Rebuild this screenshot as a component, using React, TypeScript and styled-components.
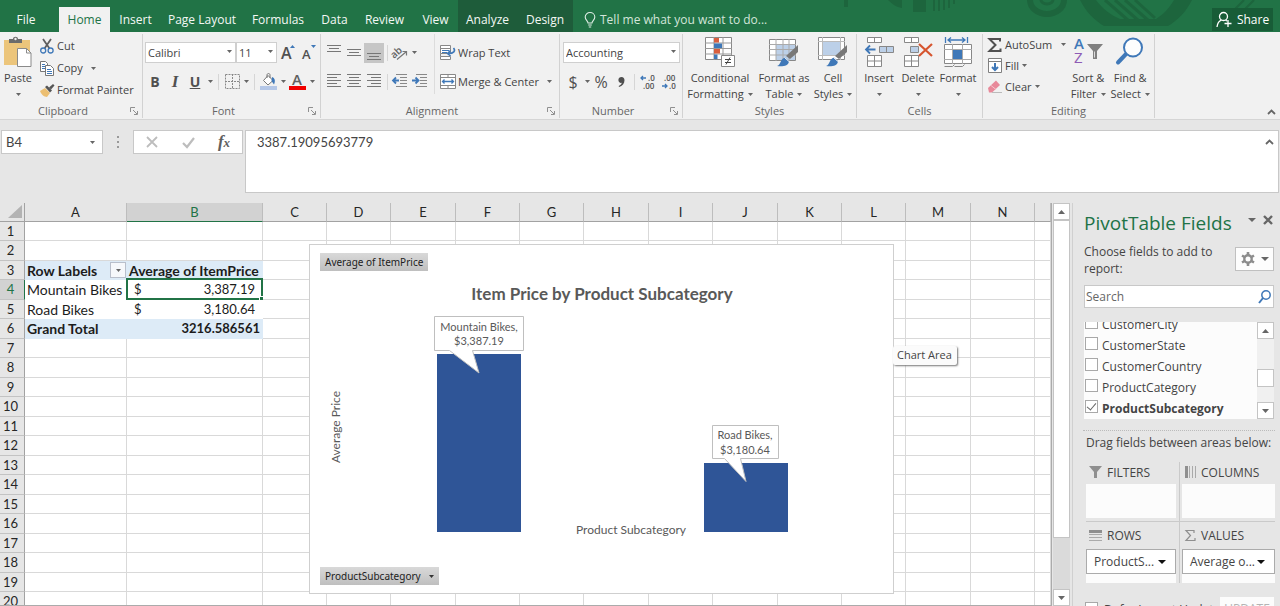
import React from "react";
import styled, { createGlobalStyle } from "styled-components";

const UI = `"Open Sans", "Noto Sans", sans-serif`;
const SHEET = `Lato, "Open Sans", sans-serif`;
const GREEN = "#217346";
const BLUE = "#3f78b8";
const INK = "#444444";

const GlobalStyle = createGlobalStyle`
  * { box-sizing: border-box; }
  body { margin: 0; background: #e6e6e6; font: 11px/16px ${UI}; color: ${INK}; }
  button, input, select { font: inherit; color: inherit; }
  button { border: 0; padding: 0; background: none; }
  svg { display: block; flex: none; overflow: visible; }
`;

const Window = styled.div`
  display: flex;
  flex-direction: column;
  height: 100vh;
  overflow: hidden;
  white-space: nowrap;
`;

/* ---------- title / tab strip ---------- */

const TabStrip = styled.header`
  position: relative;
  display: flex;
  height: 32px;
  flex: none;
  background: ${GREEN};
  color: #fff;
  font-size: 12px;
`;
const BannerArt = styled.svg`
  position: absolute;
  top: 0;
  right: 0;
  overflow: hidden;
`;
const Tabs = styled.nav`
  display: flex;
`;
const Tab = styled.button<{ $w: number; $kind?: "active" | "context" }>`
  width: ${(p) => p.$w}px;
  margin-top: ${(p) => (p.$kind === "active" ? 7 : 0)}px;
  padding-top: ${(p) => (p.$kind === "active" ? 0 : 7)}px;
  background: ${(p) => (p.$kind === "active" ? "#f1f1f1" : p.$kind === "context" ? "#1e5c3a" : "transparent")};
  color: ${(p) => (p.$kind === "active" ? GREEN : "#f4f8f5")};
`;
const FileTab = styled(Tab)`
  margin-right: 7px;
`;
const TellMe = styled.button`
  display: flex;
  align-items: center;
  gap: 4px;
  padding: 7px 0 0 11px;
  color: #d3e5da;
`;
const Share = styled.button`
  position: relative;
  display: flex;
  align-items: center;
  justify-content: center;
  gap: 5px;
  width: 61px;
  height: 23px;
  margin: 8px 7px 0 auto;
  background: #185c37;
`;

/* ---------- ribbon ---------- */

const Ribbon = styled.section`
  display: flex;
  flex: none;
  height: 88px;
  padding-top: 2px;
  background: #f1f1f1;
  border-bottom: 1px solid #d5d5d5;
`;
const Group = styled.div<{ $w: number }>`
  display: flex;
  flex-direction: column;
  width: ${(p) => p.$w}px;
  flex: none;
  height: 84px;
  border-right: 1px solid #d2d2d2;
`;
const GroupBody = styled.div<{ $pad?: number }>`
  display: flex;
  flex: 1;
  min-height: 0;
  padding-left: ${(p) => p.$pad ?? 0}px;
`;
const GroupFoot = styled.div<{ $launcher?: boolean }>`
  display: flex;
  align-items: center;
  height: 14px;
  color: #666;
  padding: 0 4px 0 ${(p) => (p.$launcher ? 4 : 20)}px;
`;
const GroupName = styled.span`
  flex: 1;
  text-align: center;
`;
const LauncherSlot = styled.span`
  display: flex;
  width: 16px;
  justify-content: flex-end;
`;
const Stack = styled.div<{ $top?: number; $gap?: number }>`
  display: flex;
  flex-direction: column;
  padding-top: ${(p) => p.$top ?? 0}px;
  gap: ${(p) => p.$gap ?? 0}px;
`;
const ClipStack = styled(Stack)`
  padding-left: 4px;
`;
const AlignStack = styled(Stack)`
  width: 110px;
  margin-bottom: 10px;
`;
const WrapStack = styled(Stack)`
  padding-left: 5px;
  border-left: 1px solid #dcdcdc;
  margin-bottom: 10px;
`;
const Bar = styled.div`
  display: flex;
  align-items: center;
  height: 21px;
`;
const Tool = styled.button<{ $w?: number; $on?: boolean }>`
  display: flex;
  align-items: center;
  justify-content: center;
  width: ${(p) => p.$w ?? 20}px;
  height: 20px;
  background: ${(p) => (p.$on ? "#c6c6c6" : "transparent")};
`;
const Glyph = styled(Tool)<{ $italic?: boolean; $line?: boolean; $light?: boolean; $size?: number }>`
  font-family: ${(p) => (p.$italic ? `"Liberation Serif", serif` : UI)};
  font-size: ${(p) => p.$size ?? 14}px;
  font-weight: ${(p) => (p.$light ? 400 : 700)};
  font-style: ${(p) => (p.$italic ? "italic" : "normal")};
  text-decoration: ${(p) => (p.$line ? "underline" : "none")};
  color: #505050;
`;
const Rule = styled.span<{ $w: number }>`
  display: flex;
  justify-content: center;
  width: ${(p) => p.$w}px;
  height: 16px;
  &::before { content: ""; width: 1px; background: #d6d6d6; }
`;
const LineButton = styled.button<{ $h: number; $gap?: number }>`
  display: flex;
  align-items: center;
  gap: ${(p) => p.$gap ?? 2}px;
  height: ${(p) => p.$h}px;
`;
const IconSlot = styled.span`
  display: flex;
  width: 15px;
`;
const PaddedCaret = styled.span`
  padding-left: 6px;
`;
const BigButton = styled.button<{ $w: number }>`
  display: flex;
  flex-direction: column;
  align-items: center;
  width: ${(p) => p.$w}px;
  padding-top: 3px;
`;
const BigIcon = styled.span`
  display: flex;
  align-items: flex-start;
  justify-content: center;
  height: 33px;
`;
const BigLine = styled.span`
  display: flex;
  align-items: center;
  gap: 4px;
  height: 16px;
`;
const SelectBox = styled.span<{ $w: number }>`
  position: relative;
  width: ${(p) => p.$w}px;
  height: 21px;
  & > svg { position: absolute; right: 4px; top: 8px; }
`;
const Select = styled.select`
  appearance: none;
  width: 100%;
  height: 100%;
  padding: 0 2px;
  border: 1px solid #cfcfcf;
  border-radius: 0;
  background: #fff;
`;
const Collapse = styled.button`
  align-self: flex-end;
  margin: 0 4px 4px auto;
`;

/* ---------- formula bar ---------- */

const FormulaRow = styled.section`
  display: flex;
  flex: none;
  align-items: flex-start;
  height: 83px;
  padding: 10px 1px 0;
  font-family: ${SHEET};
  font-size: 13px;
`;
const NameBox = styled.label`
  display: flex;
  align-items: center;
  width: 102px;
  height: 24px;
  padding: 0 7px 0 4px;
  border: 1px solid #c8c8c8;
  background: #fff;
`;
const NameInput = styled.input`
  flex: 1;
  min-width: 0;
  border: 0;
  padding: 0;
  background: none;
  outline: 0;
`;
const Grip = styled.span`
  display: flex;
  justify-content: center;
  width: 30px;
  padding-top: 6px;
`;
const FxBox = styled.div`
  display: flex;
  align-items: center;
  width: 110px;
  height: 24px;
  border: 1px solid #c8c8c8;
  background: #fff;
`;
const FxButton = styled.button`
  display: flex;
  justify-content: center;
  align-items: baseline;
  width: 36px;
  font: italic bold 17px/20px "Liberation Serif", serif;
  color: #606060;
  & > small { font-size: 13px; }
`;
const FormulaInput = styled.textarea`
  flex: 1;
  height: 63px;
  margin-left: 2px;
  padding: 3px 11px;
  border: 1px solid #c8c8c8;
  background: #fff;
  resize: none;
  outline: 0;
  overflow: hidden;
  color: inherit;
  font: 13px/16px ${SHEET};
`;
const FormulaWrap = styled.div`
  position: relative;
  display: flex;
  flex: 1;
  & > svg { position: absolute; right: 5px; top: 9px; }
`;

/* ---------- worksheet ---------- */

const Work = styled.main`
  display: flex;
  flex: 1;
  min-height: 0;
`;
const Sheet = styled.div`
  position: relative;
  flex: 1;
  min-width: 0;
  overflow: hidden;
  border-right: 1px solid #ababab;
  border-bottom: 1px solid #ababab;
  background: #fff;
`;
const Grid = styled.table`
  width: 100%;
  table-layout: fixed;
  border-collapse: separate;
  border-spacing: 0;
  font: 14px/17px ${SHEET};
  color: #1c1c1c;
`;
const Row = styled.tr`
  height: 19px;
  &:nth-child(even) { height: 20px; }
`;
const ColHead = styled.th<{ $w?: number; $on?: boolean }>`
  width: ${(p) => (p.$w ? `${p.$w}px` : "auto")};
  height: 19px;
  padding: 1px 0 0;
  font-size: 13px;
  font-weight: 400;
  background: ${(p) => (p.$on ? "#d2d2d2" : "#e6e6e6")};
  color: ${(p) => (p.$on ? GREEN : "#262626")};
  border-right: 1px solid #bdbdbd;
  border-bottom: 1px solid ${(p) => (p.$on ? GREEN : "#a2a2a2")};
`;
const Corner = styled.th`
  width: 25px;
  padding: 0 2px 1px 0;
  background: #e6e6e6;
  border-right: 1px solid #a2a2a2;
  border-bottom: 1px solid #a2a2a2;
  & > svg { margin-left: auto; }
`;
const RowHead = styled.th<{ $on?: boolean }>`
  padding: 0 3px 0 0;
  font-size: 13px;
  font-weight: 400;
  background: ${(p) => (p.$on ? "#d2d2d2" : "#e6e6e6")};
  color: ${(p) => (p.$on ? GREEN : "#262626")};
  border-right: 1px solid ${(p) => (p.$on ? GREEN : "#a2a2a2")};
  border-bottom: 1px solid #c3c3c3;
`;
const Cell = styled.td<{ $fill?: boolean; $bare?: boolean; $bold?: boolean; $number?: boolean }>`
  position: relative;
  padding: 0 2px;
  background: ${(p) => (p.$fill ? "#ddebf7" : "#fff")};
  border-right: 1px solid ${(p) => (p.$fill ? "#ddebf7" : p.$bare ? "#fff" : "#d9d9d9")};
  border-bottom: 1px solid ${(p) => (p.$fill ? "#ddebf7" : p.$bare ? "#fff" : "#d9d9d9")};
  font-size: ${(p) => (p.$number ? 13 : 14)}px;
  font-weight: ${(p) => (p.$bold ? 700 : 400)};
  text-align: ${(p) => (p.$number ? "right" : "left")};
`;
const Money = styled.span`
  display: flex;
  justify-content: space-between;
  padding: 0 5px;
`;
const HeadLabel = styled.span`
  display: flex;
  align-items: center;
  justify-content: space-between;
`;
const FilterButton = styled.button`
  display: flex;
  align-items: center;
  justify-content: center;
  width: 16px;
  height: 16px;
  margin-right: -2px;
  border: 1px solid #b9bfcb;
  background: #f6f8fb;
`;
const Selection = styled.span`
  position: absolute;
  inset: -2px -1px -1px;
  border: 2px solid ${GREEN};
  &::after {
    content: "";
    position: absolute;
    right: -3px;
    bottom: -3px;
    width: 4px;
    height: 4px;
    background: ${GREEN};
    outline: 1px solid #fff;
  }
`;

/* ---------- chart ---------- */

const ChartCard = styled.figure`
  position: absolute;
  left: 309px;
  top: 41px;
  width: 585px;
  margin: 0;
  padding: 8px 10px;
  border: 1px solid #cfcfcf;
  background: #fff;
`;
const ChartButton = styled.button`
  display: flex;
  align-items: center;
  gap: 8px;
  height: 18px;
  padding: 0 5px;
  background: linear-gradient(#d9d9d9, #bfbfbf);
  color: #1c1c1c;
  font: 10px/16px "Noto Sans", sans-serif;
`;
const Plot = styled.svg`
  width: 100%;
  height: auto;
  font-family: ${SHEET};
  fill: #595959;
`;
const Tip = styled.div`
  position: absolute;
  left: 893px;
  top: 143px;
  padding: 1px 5px 2px 4px;
  background: #fbfbfb;
  border-radius: 2px;
  box-shadow: 1px 1px 2px #777;
`;

/* ---------- scroll bars ---------- */

const ScrollBar = styled.div<{ $w: number }>`
  display: flex;
  flex-direction: column;
  flex: none;
  width: ${(p) => p.$w}px;
  background: #dadada;
`;
const ScrollButton = styled.button`
  display: flex;
  align-items: center;
  justify-content: center;
  flex: none;
  height: 17px;
  border: 1px solid #c4c4c4;
  background: #fff;
`;
const Track = styled.div<{ $size: number }>`
  flex: ${(p) => p.$size} 1 0;
`;
const Thumb = styled(Track)`
  min-height: 10px;
  border: 1px solid #c4c4c4;
  background: #fff;
`;
const SheetScroll = styled(ScrollBar)`
  margin: 0 2px 0 1px;
`;

/* ---------- field pane ---------- */

const Pane = styled.aside`
  flex: none;
  width: 208px;
  padding: 0 5px 0 10px;
  border-left: 1px solid #d0d0d0;
  overflow: hidden;
  font-size: 12px;
`;
const PaneHead = styled.div`
  display: flex;
  align-items: center;
  height: 40px;
  padding: 0 2px 0 1px;
`;
const PaneTitle = styled.h2`
  flex: 1;
  margin: 0;
  font: 400 19px/26px ${UI};
  color: ${GREEN};
`;
const PaneHeadTools = styled.div`
  display: flex;
  align-items: center;
  gap: 7px;
  padding-bottom: 6px;
`;
const Choose = styled.div`
  display: flex;
  justify-content: space-between;
  align-items: flex-start;
  white-space: normal;
  line-height: 17px;
  height: 42px;
  padding: 0 1px;
`;
const ChooseText = styled.p`
  margin: 0;
  width: 140px;
`;
const GearButton = styled.button`
  display: flex;
  align-items: center;
  justify-content: center;
  gap: 6px;
  width: 39px;
  height: 24px;
  margin-top: 4px;
  border: 1px solid #c0c0c0;
  background: #fdfdfd;
`;
const SearchBox = styled.label`
  display: flex;
  align-items: center;
  height: 23px;
  margin: 0 1px 14px;
  padding: 0 2px 0 1px;
  border: 1px solid #c8c8c8;
  background: #fff;
`;
const SearchInput = styled.input`
  flex: 1;
  min-width: 0;
  padding: 0;
  border: 0;
  outline: 0;
  background: none;
  &::placeholder { color: #666; opacity: 1; }
`;
const FieldArea = styled.div`
  display: flex;
  height: 97px;
  margin: 0 1px 11px;
`;
const FieldList = styled.div`
  display: flex;
  flex-direction: column;
  justify-content: flex-end;
  flex: 1;
  overflow: hidden;
  background: #fcfcfc;
`;
const Field = styled.label<{ $bold?: boolean }>`
  display: flex;
  flex: none;
  align-items: center;
  gap: 4px;
  height: 21px;
  padding-left: 1px;
  font-weight: ${(p) => (p.$bold ? 700 : 400)};
`;
const Check = styled.input`
  appearance: none;
  display: grid;
  width: 13px;
  height: 13px;
  margin: 0 0 4px;
  border: 1px solid #a8a8a8;
  background: #fff;
  &:checked::before {
    content: "";
    justify-self: center;
    width: 4px;
    height: 8px;
    border: solid #666;
    border-width: 0 1px 1px 0;
    transform: rotate(40deg);
  }
`;
const FieldScroll = styled(ScrollBar)`
  background: #f0f0f0;
`;
const Drag = styled.p`
  margin: 0;
  padding: 4px 3px 11px;
  border-top: 1px dotted #bbb;
`;
const Zones = styled.div`
  display: grid;
  grid-template-columns: 94px 1fr;
  padding-left: 3px;
`;
const Zone = styled.section<{ $left?: boolean; $top?: boolean }>`
  display: flex;
  flex-direction: column;
  gap: ${(p) => (p.$top ? 0 : 2)}px;
  padding-top: ${(p) => (p.$top ? 0 : 3)}px;
  padding-bottom: ${(p) => (p.$top ? 3 : 0)}px;
  padding-left: ${(p) => (p.$left ? 0 : 2)}px;
  padding-right: ${(p) => (p.$left ? 3 : 0)}px;
  border-right: ${(p) => (p.$left ? "1px solid #cacaca" : "0")};
  border-bottom: ${(p) => (p.$top ? "1px solid #cacaca" : "0")};
`;
const ZoneTitle = styled.h3`
  display: flex;
  align-items: center;
  gap: 5px;
  height: 22px;
  margin: 0;
  padding-left: 3px;
  font: 400 12px/18px ${UI};
  & > svg { margin-bottom: 2px; }
`;
const ZoneDrop = styled.div`
  height: 34px;
  background: #fcfcfc;
`;
const ZonePill = styled.button`
  display: flex;
  align-items: center;
  justify-content: space-between;
  width: 100%;
  height: 25px;
  padding: 0 9px 0 7px;
  border: 1px solid #ababab;
  background: #fff;
`;
const Defer = styled.div`
  display: flex;
  align-items: flex-start;
  justify-content: space-between;
  padding: 14px 1px 0 2px;
`;
const DeferLabel = styled.label`
  display: flex;
  gap: 6px;
  padding-top: 5px;
`;
const Update = styled.button`
  width: 54px;
  height: 24px;
  background: #fcfcfc;
  color: #b4b4b4;
`;

/* ---------- icons ---------- */

const Caret = ({ w = 5, up = false, color = "#666" }: { w?: number; up?: boolean; color?: string }) => {
  const h = Math.ceil(w / 2);
  return (
    <svg width={w} height={h} aria-hidden="true">
      <path d={up ? `M0 ${h}h${w}L${w / 2} 0z` : `M0 0h${w}L${w / 2} ${h}z`} fill={color} />
    </svg>
  );
};
const Chevron = () => (
  <svg width="9" height="6"><path d="M1 5l3.500-3.500L8 5" fill="none" stroke="#666" strokeWidth="1.800" /></svg>
);
const Launcher = () => (
  <svg width="8" height="8" fill="none" stroke="#909090"><path d="M.5 5V.5H5M3 3l4 4M7.500 4v3.500H4" /></svg>
);
const Bulb = () => (
  <svg width="12" height="16" fill="none" stroke="#e0eee6" strokeWidth="1.100">
    <path d="M4 11c0-2-2.800-3-2.800-6a4.800 4.500 0 0 1 9.600 0c0 3-2.800 4-2.800 6zM4.200 13h3.600M4.800 15h2.400" />
  </svg>
);
const Person = () => (
  <svg width="16" height="17" fill="none" stroke="#fff" strokeWidth="1.300">
    <circle cx="7.500" cy="5.500" r="4" /><path d="M1 16c.5-4 2-6 4.500-6.800M9.500 9.200l1.500.8M12 9v7M8.500 12.500h7" />
  </svg>
);
const PasteIcon = () => (
  <svg width="28" height="31">
    <path d="M0 3h26v25H0z" fill="#ecc57b" /><path d="M5 2h4c0-3 5-3 5 0h4v4H5z" fill="#6b6b6b" />
    <circle cx="11.500" cy="2" r="1.200" fill="#f1f1f1" />
    <path d="M13.500 11.500h9l4.500 4.500v13.500H13.500z" fill="#fff" stroke="#8a8a8a" /><path d="M22.500 11.500v4.500H27" fill="none" stroke="#8a8a8a" />
  </svg>
);
const CutIcon = () => (
  <svg width="14" height="15" fill="none">
    <path d="M3 0l6.500 9.500M11 0L4.500 9.500" stroke="#606060" strokeWidth="1.800" />
    <circle cx="3.200" cy="11.500" r="2.500" stroke={BLUE} strokeWidth="1.300" /><circle cx="10.600" cy="11.500" r="2.500" stroke={BLUE} strokeWidth="1.300" />
  </svg>
);
const CopyIcon = () => (
  <svg width="14" height="15" fill="#fff" stroke="#777">
    <path d="M.5.500h5l2 2v8h-7z" /><path d="M2 3.500h3M2 5.500h3M2 7.500h3" stroke={BLUE} />
    <path d="M5.500 4.500h5l3 3v7h-8z" /><path d="M7 8.500h4M7 10.500h5M7 12.500h5" stroke={BLUE} />
  </svg>
);
const BrushIcon = () => (
  <svg width="15" height="14">
    <path d="M0 8l5-3 5 5-3 4c-3 0-6-3-7-6z" fill="#ecbf72" /><path d="M5 4l2-1.500 5 5L10 9.500z" fill="#555" />
    <path d="M9 4.500L13 1l1.500 1.500L11 6.500z" fill="#555" />
  </svg>
);
const GrowFont = ({ down }: { down?: boolean }) => (
  <svg width="14" height="16">
    <text x="0" y="14" fontFamily="Open Sans" fontWeight="600" fontSize={down ? 13 : 16} fill="#505050">A</text>
    <path d={down ? "M9 0h5l-2.500 3z" : "M9 3h5l-2.500-3z"} fill={BLUE} />
  </svg>
);
const BordersIcon = () => (
  <svg width="15" height="15" fill="none" stroke="#888" strokeDasharray="2 1"><path d="M.5.500h14v14H.500zM7.500 0v15M0 7.500h15" /></svg>
);
const FillIcon = () => (
  <svg width="17" height="17">
    <path d="M0 13h17v4H0z" fill="#b4c7e7" /><path d="M3.500 7.500L8 2.500l5 5-5 4.500z" fill="#fff" stroke="#777" />
    <path d="M7 5V2c0-2 3-2 3 0v3" fill="none" stroke="#777" /><path d="M12 4c3 1 3.500 4 2 7.500L11.500 8z" fill={BLUE} />
  </svg>
);
const FontColor = () => (
  <svg width="17" height="17">
    <path d="M0 13h17v4H0z" fill="#f00000" /><text x="3" y="12" fontFamily="Open Sans" fontWeight="600" fontSize="15" fill="#606060">A</text>
  </svg>
);
const CommaIcon = () => (
  <svg width="7" height="10"><path d="M3.500 0C5.600 0 6.500 1.500 6.500 3.300 6.500 6.500 4.500 9 1 10l-.3-1C2.600 8.200 3.600 7.200 3.700 5.800 1.800 6.200.4 5 .4 3 .4 1.200 1.700 0 3.500 0z" fill="#505050" /></svg>
);
const LinesIcon = ({ lines, h = 15 }: { lines: [number, number, number][]; h?: number }) => (
  <svg width="14" height={h} stroke="#777">{lines.map(([x, y, w], i) => <path key={i} d={`M${x} ${y + 0.5}h${w}`} />)}</svg>
);
const Orientation = () => (
  <svg width="15" height="14">
    <text transform="rotate(-42 4 9)" x="-1" y="10" fontFamily="Open Sans" fontSize="10" fontWeight="600" fill="#606060">ab</text>
    <path d="M4 13.500L13.500 5.500M13.500 9.500v-4H9.500" fill="none" stroke="#777" strokeWidth="1.200" />
  </svg>
);
const Indent = ({ right }: { right?: boolean }) => (
  <svg width="16" height="15">
    <path d="M4 .5h11M8 3.500h7M8 6.500h7M8 9.500h7M4 12.500h11" stroke="#888" />
    <path d={right ? "M0 6.500h6M3.500 3.500L6.500 6.500l-3 3" : "M1 6.500h6M4 3.500L1 6.500l3 3"} stroke={BLUE} strokeWidth="1.800" fill="none" />
  </svg>
);
const WrapIcon = () => (
  <svg width="16" height="15" fill="none">
    <path d="M.5.500h10v3H.500zM.5 3.500h10v5H.500zM.5 11.500h10v3H.500zM.5 8.500v3" stroke="#888" fill="#fff" />
    <path d="M2 5.500h7M2 7.500h5" stroke={BLUE} /><path d="M13.500 3c2.500 3 0 5.500-5 5.500M10.500 5.500l-3 3 3 2.500" stroke={BLUE} strokeWidth="1.600" />
  </svg>
);
const MergeIcon = () => (
  <svg width="16" height="15" fill="none">
    <path d="M.5.500h15v14H.500z" stroke="#888" fill="#fff" /><path d="M0 3.500h16M0 11.500h16M8 0v3.500M8 11.500V15" stroke="#888" />
    <path d="M2.500 7.500h11M4.500 5.500l-2 2 2 2M11.500 5.500l2 2-2 2" stroke={BLUE} strokeWidth="1.300" />
  </svg>
);
const Decimals = ({ less }: { less?: boolean }) => (
  <svg width="16" height="16" fontFamily="Open Sans" fontSize="8" fontWeight="600" fill="#505050">
    <text x={less ? 3 : 8} y="7">{less ? ".00" : ".0"}</text><text x={less ? 8 : 3} y="15">{less ? ".0" : ".00"}</text>
    <path d={less ? "M1 12h5M4 10l2 2-2 2" : "M1 4h5M3 2L1 4l2 2"} fill="none" stroke={BLUE} strokeWidth="1.300" />
  </svg>
);
const ConditionalIcon = () => (
  <svg width="30" height="31">
    <path d="M.5.500h26v22H.500z" fill="#fff" stroke="#888" /><path d="M0 6h27M0 11.500h27M0 17h27M9 0v23M18 0v23" stroke="#999" />
    <path d="M9 1h5v4.500H9zM9 12h6v4.500H9z" fill="#d95f3e" /><path d="M9 6.500h8V11H9zM9 17.500h3.500V22H9z" fill={BLUE} />
    <path d="M16.500 18.500h13v11h-13z" fill="#fff" stroke="#888" /><path d="M20 22.500h6M20 25.500h6M25 20.500l-4 7" stroke="#444" />
  </svg>
);
const Paintbrush = () => (
  <g>
    <path d="M29 8v7l-8 7-4-3z" fill="#787878" /><path d="M8 29c4-1 3-7 8-8.500l4 3.500c0 5-7 6-12 5z" fill={BLUE} />
    <path d="M15.500 20.500l4.500 4" stroke="#f1f1f1" />
  </g>
);
const TableIcon = () => (
  <svg width="30" height="31">
    <path d="M.5 2.500h26v21H.500z" fill="#fff" stroke="#888" /><path d="M7 8h19v15H7z" fill="#bcd0e8" />
    <path d="M0 7.500h27M0 12.500h27M0 18h27M7 2v22M14 2v22M20 2v22" stroke="#aaa" /><Paintbrush />
  </svg>
);
const CellStyleIcon = () => (
  <svg width="30" height="31">
    <path d="M.5.500h26v22H.500z" fill="#fff" stroke="#888" /><path d="M0 4.500h27M0 18.500h27M4.500 0v23M22.500 0v23" stroke="#bbb" />
    <path d="M5 5h17v13H5z" fill="#bcd0e8" /><Paintbrush />
  </svg>
);
const InsertIcon = () => (
  <svg width="29" height="31" fill="#fff" stroke="#888">
    <path d="M2.500.500h14v5h-14zM9.500.500v5M2.500 18.500h14v11h-14zM2.500 24h14M9.500 18.500v11" /><path d="M14.500 9.500h14v6h-14zM21.500 9.500v6" fill="#bcd0e8" />
    <path d="M1 12.500h9.500M5 8.500l-4 4 4 4" stroke={BLUE} strokeWidth="1.800" fill="none" />
  </svg>
);
const DeleteIcon = () => (
  <svg width="29" height="31" fill="#fff" stroke="#888">
    <path d="M.5.500h14v5H.500zM7.500.500v5M.5 18.500h14v11H.500zM.5 24h14M7.500 18.500v11" /><path d="M6.500 9.500h8v6h-8z" fill="#bcd0e8" />
    <path d="M15 7l13 12M28 7L15 19" stroke="#d6552f" strokeWidth="2.200" fill="none" />
  </svg>
);
const FormatIcon = () => (
  <svg width="28" height="31" fill="#fff" stroke="#888">
    <path d="M.5 7.500h27v19H.500z" /><path d="M0 12.500h28M0 22.500h28M8.500 7v20M18.500 7v20" stroke="#aaa" />
    <path d="M9 13h9v9H9z" fill={BLUE} stroke="none" /><path d="M.5 29.500h8l2-2M10.500 29.500h8l2-2" fill="none" />
    <path d="M1.500 0v6M23.500 0v6M4 3h17M7 .5L4 3l3 2.500M18 .5L21 3l-3 2.500" stroke={BLUE} strokeWidth="1.300" fill="none" />
  </svg>
);
const SigmaIcon = () => (
  <svg width="14" height="14"><path d="M12 3.500V1H1.500l6 6-6 6H12.500v-2.500" fill="none" stroke="#505050" strokeWidth="2" /></svg>
);
const FillDown = () => (
  <svg width="14" height="15" fill="#fff" stroke="#808080">
    <path d="M.5.500h13v14H.500zM0 3.500h14" /><path d="M7 5v7M4 9l3 3 3-3" stroke={BLUE} strokeWidth="2" fill="none" />
  </svg>
);
const Eraser = () => (
  <svg width="14" height="14"><path d="M0 8l8-7.500L12 5l-8 7.500H1z" fill="#e8899a" /><path d="M3 5.500l5 4" stroke="#f5c3cb" /><path d="M4 12.500h10" stroke="#bbb" /></svg>
);
const SortIcon = () => (
  <svg width="29" height="30" fontFamily="Open Sans" fontSize="15">
    <text x="0" y="12" fill={BLUE} fontWeight="600">A</text><text x="0" y="26" fill="#8e5bb5">Z</text>
    <path d="M13 7h16l-6 7v8h-4v-8z" fill="#808080" /><path d="M20.500 14.500v6" stroke="#ddd" />
  </svg>
);
const FindIcon = () => (
  <svg width="28" height="29"><path d="M11 16L2 25.500" stroke={BLUE} strokeWidth="4" strokeLinecap="round" /><circle cx="17" cy="10.500" r="9" fill="#fdfdfd" stroke={BLUE} strokeWidth="2" /></svg>
);
const SearchIcon = () => (
  <svg width="13" height="14" fill="none" stroke={BLUE}><circle cx="8" cy="5" r="4.200" strokeWidth="1.500" /><path d="M5 8L1 13" strokeWidth="2" /></svg>
);
const Gear = () => (
  <svg width="14" height="14" fill="none" stroke="#8c8c8c"><circle cx="7" cy="7" r="3.700" strokeWidth="2.400" />
    <path d="M7 0v3M7 11v3M1 3.500l2.500 1.500M10.500 9l2.500 1.500M1 10.500L3.500 9M10.500 5L13 3.500" strokeWidth="2.600" /></svg>
);
const Cross = ({ size, color, width }: { size: number; color: string; width: number }) => (
  <svg width={size} height={size}><path d={`M1 1L${size - 1} ${size - 1}M${size - 1} 1L1 ${size - 1}`} stroke={color} strokeWidth={width} /></svg>
);
const FunnelIcon = () => <svg width="13" height="12"><path d="M0 0h13L8 6v6H5V6z" fill="#8f8f8f" /></svg>;
const ColumnsIcon = () => (
  <svg width="11" height="12"><path d="M0 0h3v12H0z" fill="#8f8f8f" /><path d="M4.500 0v12M7.500 0v12M10.500 0v12" stroke="#aaa" /></svg>
);
const RowsIcon = () => (
  <svg width="13" height="11"><path d="M0 0h13v3H0z" fill="#8f8f8f" /><path d="M0 4.500h13M0 7.500h13M0 10.500h13" stroke="#aaa" /></svg>
);
const ValuesIcon = () => <svg width="11" height="11"><path d="M9 3V.500H1L5.500 5.500 1 10.500h9V8" fill="none" stroke="#8f8f8f" strokeWidth="1.200" /></svg>;

/* ---------- data ---------- */

const TABS: { name: string; w: number; kind?: "active" | "context" }[] = [
  { name: "Home", w: 51, kind: "active" },
  { name: "Insert", w: 51 },
  { name: "Page Layout", w: 82 },
  { name: "Formulas", w: 70 },
  { name: "Data", w: 43 },
  { name: "Review", w: 57 },
  { name: "View", w: 45 },
  { name: "Analyze", w: 59, kind: "context" },
  { name: "Design", w: 56, kind: "context" },
];
const COLUMNS: [string, number][] = [
  ["A", 102], ["B", 136], ["C", 64], ["D", 64], ["E", 65], ["F", 64], ["G", 64],
  ["H", 65], ["I", 64], ["J", 65], ["K", 64], ["L", 64], ["M", 65], ["N", 64],
];
const FIELDS = ["CustomerCity", "CustomerState", "CustomerCountry", "ProductCategory", "ProductSubcategory"];

function leadCells(row: number) {
  switch (row) {
    case 3:
      return [
        <Cell key="a" $fill $bold><HeadLabel>Row Labels<FilterButton aria-label="Filter row labels"><Caret /></FilterButton></HeadLabel></Cell>,
        <Cell key="b" $fill $bold>Average of ItemPrice</Cell>,
      ];
    case 4:
      return [
        <Cell key="a" $bare>Mountain Bikes</Cell>,
        <Cell key="b" $bare $number><Money><span>$</span><span>3,387.19</span></Money><Selection /></Cell>,
      ];
    case 5:
      return [
        <Cell key="a" $bare>Road Bikes</Cell>,
        <Cell key="b" $bare $number><Money><span>$</span><span>3,180.64</span></Money></Cell>,
      ];
    case 6:
      return [<Cell key="a" $fill $bold>Grand Total</Cell>, <Cell key="b" $fill $bold $number>3216.586561</Cell>];
    default:
      return [<Cell key="a" />, <Cell key="b" />];
  }
}

function RibbonGroup({ name, w, pad, launcher, children }: {
  name: string; w: number; pad?: number; launcher?: boolean; children: React.ReactNode;
}) {
  return (
    <Group $w={w}>
      <GroupBody $pad={pad}>{children}</GroupBody>
      <GroupFoot $launcher={launcher}>
        <GroupName>{name}</GroupName>
        <LauncherSlot>{launcher && <button aria-label={`${name} settings`}><Launcher /></button>}</LauncherSlot>
      </GroupFoot>
    </Group>
  );
}

function DropDown({ label, value, w }: { label: string; value: string; w: number }) {
  return (
    <SelectBox $w={w}>
      <Select aria-label={label} defaultValue={value}><option>{value}</option></Select>
      <Caret />
    </SelectBox>
  );
}

function Large({ w, icon, first, second }: { w: number; icon: React.ReactNode; first: string; second?: string }) {
  return (
    <BigButton $w={w}>
      <BigIcon>{icon}</BigIcon>
      <BigLine>{first}</BigLine>
      <BigLine>{second}<Caret /></BigLine>
    </BigButton>
  );
}

const CaretTool = ({ w, label }: { w: number; label: string }) => <Tool $w={w} aria-label={label}><Caret /></Tool>;

export default function App() {
  return (
    <Window>
      <GlobalStyle />
      <TabStrip>
        <BannerArt width="460" height="32" fill="none" stroke="#1d653d">
          <path d="M26 0v7" strokeWidth="4" />
          <path d="M68 0c4 4 8 7 14 8V0zM93 0h13v12H93z" fill="#1d653d" stroke="none" />
          <path d="M114 0v11M119 0v11M124 0v10M129 0v8M134 0v4" strokeWidth="2" />
          <path d="M210 0a17 14 0 0 0 34 0" strokeWidth="6" /><path d="M221 0a6 4 0 0 0 12 0" strokeWidth="3" />
          <path d="M260 0c6 12 14 20 24 26h64c10-6 18-14 24-26h-18c-5 8-10 14-18 19h-36c-10-4-18-11-24-19z" fill="#1d653d" stroke="none" />
          <path d="M285 0l24 21M295 0l24 21M305 0l24 21M315 0l20 18" strokeWidth="3" />
          <path d="M424 0l-20 20M434 0l-20 20" strokeWidth="2" />
        </BannerArt>
        <FileTab $w={52}>File</FileTab>
        <Tabs>{TABS.map((t) => <Tab key={t.name} $w={t.w} $kind={t.kind}>{t.name}</Tab>)}</Tabs>
        <TellMe><Bulb />Tell me what you want to do...</TellMe>
        <Share><Person />Share</Share>
      </TabStrip>

      <Ribbon>
        <RibbonGroup name="Clipboard" w={143} launcher>
          <BigButton $w={36}>
            <BigIcon><PasteIcon /></BigIcon>
            <BigLine>Paste</BigLine>
            <BigLine><Caret /></BigLine>
          </BigButton>
          <ClipStack $top={1}>
            <LineButton $h={22}><IconSlot><CutIcon /></IconSlot>Cut</LineButton>
            <LineButton $h={22}><IconSlot><CopyIcon /></IconSlot>Copy<PaddedCaret><Caret /></PaddedCaret></LineButton>
            <LineButton $h={22}><IconSlot><BrushIcon /></IconSlot>Format Painter</LineButton>
          </ClipStack>
        </RibbonGroup>

        <RibbonGroup name="Font" w={178} pad={2} launcher>
          <Stack $top={8} $gap={8}>
            <Bar>
              <DropDown label="Font" value="Calibri" w={91} />
              <DropDown label="Font size" value="11" w={41} />
              <Tool $w={22} aria-label="Increase font size"><GrowFont /></Tool>
              <Tool aria-label="Decrease font size"><GrowFont down /></Tool>
            </Bar>
            <Bar>
              <Glyph>B</Glyph><Glyph $italic $size={17}>I</Glyph><Glyph $line>U</Glyph>
              <CaretTool w={10} label="Underline style" /><Rule $w={7} />
              <Tool aria-label="Borders"><BordersIcon /></Tool><CaretTool w={8} label="Border style" /><Rule $w={8} />
              <Tool aria-label="Fill color"><FillIcon /></Tool><CaretTool w={10} label="Pick fill color" />
              <Tool $w={19} aria-label="Font color"><FontColor /></Tool><CaretTool w={10} label="Pick font color" />
            </Bar>
          </Stack>
        </RibbonGroup>

        <RibbonGroup name="Alignment" w={239} pad={3} launcher>
          <AlignStack $top={8} $gap={8}>
            <Bar>
              <Tool aria-label="Top align"><LinesIcon lines={[[0, 1, 14], [2, 4, 10], [0, 7, 14]]} h={18} /></Tool>
              <Tool aria-label="Middle align"><LinesIcon lines={[[0, 5, 14], [2, 8, 10], [0, 11, 14]]} h={18} /></Tool>
              <Tool $on aria-label="Bottom align"><LinesIcon lines={[[0, 9, 14], [2, 12, 10], [0, 15, 14]]} h={18} /></Tool>
              <Rule $w={6} />
              <Tool aria-label="Orientation"><Orientation /></Tool><CaretTool w={8} label="Orientation options" />
            </Bar>
            <Bar>
              <Tool aria-label="Align left"><LinesIcon lines={[[0, 0, 14], [0, 3, 10], [0, 6, 14], [0, 9, 10], [0, 12, 14]]} /></Tool>
              <Tool aria-label="Center"><LinesIcon lines={[[0, 0, 14], [2, 3, 10], [0, 6, 14], [2, 9, 10], [0, 12, 14]]} /></Tool>
              <Tool aria-label="Align right"><LinesIcon lines={[[0, 0, 14], [4, 3, 10], [0, 6, 14], [4, 9, 10], [0, 12, 14]]} /></Tool>
              <Rule $w={6} />
              <Tool aria-label="Decrease indent"><Indent /></Tool><Tool aria-label="Increase indent"><Indent right /></Tool>
            </Bar>
          </AlignStack>
          <WrapStack $top={8} $gap={8}>
            <LineButton $h={21}><WrapIcon />Wrap Text</LineButton>
            <LineButton $h={21}><MergeIcon />Merge &amp; Center<PaddedCaret><Caret /></PaddedCaret></LineButton>
          </WrapStack>
        </RibbonGroup>

        <RibbonGroup name="Number" w={123} pad={3} launcher>
          <Stack $top={8} $gap={8}>
            <Bar><DropDown label="Number format" value="Accounting" w={117} /></Bar>
            <Bar>
              <Glyph $light $size={16}>$</Glyph><CaretTool w={8} label="Currency" />
              <Glyph $light $size={16}>%</Glyph><Tool aria-label="Comma style"><CommaIcon /></Tool><Rule $w={6} />
              <Tool $w={22} aria-label="Increase decimal"><Decimals /></Tool><Tool aria-label="Decrease decimal"><Decimals less /></Tool>
            </Bar>
          </Stack>
        </RibbonGroup>

        <RibbonGroup name="Styles" w={174}>
          <Large w={74} icon={<ConditionalIcon />} first="Conditional" second="Formatting" />
          <Large w={54} icon={<TableIcon />} first="Format as" second="Table" />
          <Large w={44} icon={<CellStyleIcon />} first="Cell" second="Styles" />
        </RibbonGroup>

        <RibbonGroup name="Cells" w={126} pad={3}>
          <Large w={38} icon={<InsertIcon />} first="Insert" />
          <Large w={40} icon={<DeleteIcon />} first="Delete" />
          <Large w={40} icon={<FormatIcon />} first="Format" />
        </RibbonGroup>

        <RibbonGroup name="Editing" w={172} pad={5}>
          <Stack>
            <LineButton $h={21} $gap={3}><SigmaIcon />AutoSum<PaddedCaret><Caret /></PaddedCaret></LineButton>
            <LineButton $h={21} $gap={3}><FillDown />Fill<Caret /></LineButton>
            <LineButton $h={21} $gap={3}><Eraser />Clear<Caret /></LineButton>
          </Stack>
          <Large w={44} icon={<SortIcon />} first="Sort &amp;" second="Filter" />
          <Large w={40} icon={<FindIcon />} first="Find &amp;" second="Select" />
        </RibbonGroup>
        <Collapse aria-label="Collapse the ribbon"><Chevron /></Collapse>
      </Ribbon>

      <FormulaRow>
        <NameBox><NameInput aria-label="Name box" defaultValue="B4" /><Caret /></NameBox>
        <Grip><svg width="2" height="12" fill="#999"><path d="M0 0h2v2H0zM0 5h2v2H0zM0 10h2v2H0z" /></svg></Grip>
        <FxBox>
          <FxButton aria-label="Cancel"><Cross size={12} color="#bdbdbd" width={1.8} /></FxButton>
          <FxButton aria-label="Enter"><svg width="13" height="11"><path d="M1 6l4 4 7-9" fill="none" stroke="#bdbdbd" strokeWidth="2.200" /></svg></FxButton>
          <FxButton>f<small>x</small></FxButton>
        </FxBox>
        <FormulaWrap>
          <FormulaInput aria-label="Formula bar" defaultValue="3387.19095693779" />
          <Chevron />
        </FormulaWrap>
      </FormulaRow>

      <Work>
        <Sheet>
          <Grid>
            <thead>
              <tr>
                <Corner aria-label="Select all"><svg width="14" height="13"><path d="M14 0v13H0z" fill="#b3b3b3" /></svg></Corner>
                {COLUMNS.map(([c, w]) => <ColHead key={c} $w={w} $on={c === "B"}>{c}</ColHead>)}
                <ColHead />
              </tr>
            </thead>
            <tbody>
              {Array.from({ length: 20 }, (_, i) => i + 1).map((r) => (
                <Row key={r}>
                  <RowHead $on={r === 4}>{r}</RowHead>
                  {leadCells(r)}
                  {COLUMNS.slice(2).map(([c]) => <Cell key={c} />)}
                  <Cell />
                </Row>
              ))}
            </tbody>
          </Grid>
          <ChartCard>
            <ChartButton>Average of ItemPrice</ChartButton>
            <Plot viewBox="0 0 563 296" role="img" aria-label="Item Price by Product Subcategory">
              <text x="282" y="29" textAnchor="middle" fontSize="17" fontWeight="700">Item Price by Product Subcategory</text>
              <path d="M117 83h84v178h-84zM384 192h84v69h-84z" fill="#2f5597" />
              <g fill="#fff" stroke="#bfbfbf">
                <path d="M114.500 45.500h89v34h-51l6.500 22.500-29.500-22.500h-15z" />
                <path d="M392.500 154.500h66v33h-38l5.500 23-21.500-23h-12z" />
              </g>
              <g fontSize="11" textAnchor="middle">
                <text x="159" y="60">Mountain Bikes,</text><text x="159" y="74">$3,387.19</text>
                <text x="425" y="168">Road Bikes,</text><text x="425" y="183">$3,180.64</text>
              </g>
              <g fontSize="12" textAnchor="middle">
                <text x="311" y="263">Product Subcategory</text>
                <text transform="translate(20 156) rotate(-90)">Average Price</text>
              </g>
            </Plot>
            <ChartButton>ProductSubcategory<Caret color="#333" /></ChartButton>
          </ChartCard>
          <Tip role="tooltip">Chart Area</Tip>
        </Sheet>

        <SheetScroll $w={17}>
          <ScrollButton aria-label="Scroll up"><Caret w={7} up /></ScrollButton>
          <Thumb $size={318} />
          <Track $size={51} />
          <ScrollButton aria-label="Scroll down"><Caret w={7} /></ScrollButton>
        </SheetScroll>

        <Pane>
          <PaneHead>
            <PaneTitle>PivotTable Fields</PaneTitle>
            <PaneHeadTools>
              <button aria-label="Pane options"><Caret w={8} /></button>
              <button aria-label="Close pane"><Cross size={10} color="#666" width={2.4} /></button>
            </PaneHeadTools>
          </PaneHead>
          <Choose>
            <ChooseText>Choose fields to add to report:</ChooseText>
            <GearButton aria-label="Layout tools"><Gear /><Caret w={8} /></GearButton>
          </Choose>
          <SearchBox><SearchInput type="text" placeholder="Search" aria-label="Search fields" /><SearchIcon /></SearchBox>
          <FieldArea>
            <FieldList>
              {FIELDS.map((f, i) => (
                <Field key={f} $bold={i === 4}><Check type="checkbox" defaultChecked={i === 4} />{f}</Field>
              ))}
            </FieldList>
            <FieldScroll $w={17}>
              <ScrollButton aria-label="Scroll fields up"><Caret w={7} up /></ScrollButton>
              <Track $size={31} />
              <Thumb $size={17} />
              <Track $size={15} />
              <ScrollButton aria-label="Scroll fields down"><Caret w={7} /></ScrollButton>
            </FieldScroll>
          </FieldArea>
          <Drag>Drag fields between areas below:</Drag>
          <Zones>
            <Zone $left $top><ZoneTitle><FunnelIcon />FILTERS</ZoneTitle><ZoneDrop /></Zone>
            <Zone $top><ZoneTitle><ColumnsIcon />COLUMNS</ZoneTitle><ZoneDrop /></Zone>
            <Zone $left><ZoneTitle><RowsIcon />ROWS</ZoneTitle><ZoneDrop><ZonePill>ProductS...<Caret w={8} color="#111" /></ZonePill></ZoneDrop></Zone>
            <Zone><ZoneTitle><ValuesIcon />VALUES</ZoneTitle><ZoneDrop><ZonePill>Average o...<Caret w={8} color="#111" /></ZonePill></ZoneDrop></Zone>
          </Zones>
          <Defer>
            <DeferLabel><Check type="checkbox" />Defer Layout Update</DeferLabel>
            <Update disabled>UPDATE</Update>
          </Defer>
        </Pane>
      </Work>
    </Window>
  );
}
